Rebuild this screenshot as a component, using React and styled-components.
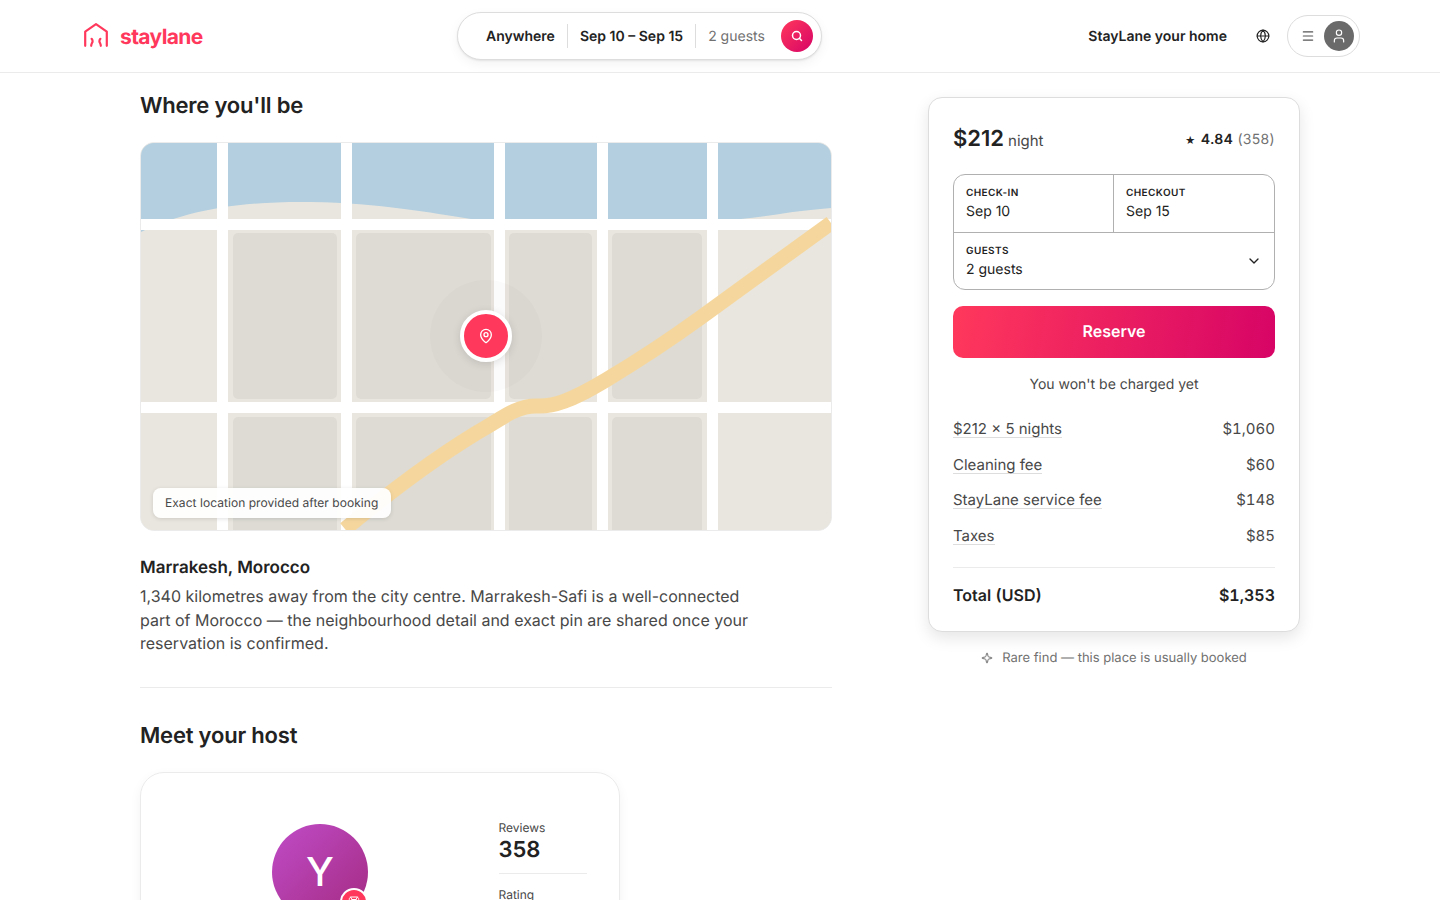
import React from 'react'
import styled, { createGlobalStyle } from 'styled-components'
import { Search, Globe, Menu, User, MapPin, ChevronDown, Sparkle, Medal } from 'lucide-react'

const GlobalStyle = createGlobalStyle`
  * { box-sizing: border-box; }
  html, body { margin: 0; padding: 0; height: 100%; overflow: hidden; }
  body {
    font-family: Inter, "Liberation Sans", sans-serif;
    color: #222;
    background: #fff;
    text-rendering: geometricPrecision;
  }
  #root { height: 100vh; overflow: hidden; }
`

const Header = styled.header`
  height: 73px;
  padding: 0 80px;
  border-bottom: 1px solid #ebebeb;
  display: grid;
  grid-template-columns: 377px auto 1fr;
  align-items: center;
`

const Logo = styled.a`
  display: flex;
  align-items: center;
  gap: 12px;
  padding-left: 4px;
  color: #ff385c;
  font-size: 21px;
  line-height: 26px;
  font-weight: 700;
  letter-spacing: -0.6px;
  svg { margin-bottom: 2px; }
  span { padding-top: 3px; }
`

const SearchPill = styled.div`
  display: flex;
  align-items: center;
  height: 48px;
  padding: 0 8px 0 16px;
  border: 1px solid #dddddd;
  border-radius: 24px;
  background: #fff;
  box-shadow: 0 1px 2px rgba(0, 0, 0, 0.08), 0 4px 12px rgba(0, 0, 0, 0.05);
`

const PillItem = styled.span`
  height: 24px;
  padding: 0 12px;
  font-size: 14px;
  line-height: 26px;
  font-weight: ${({ $muted }) => ($muted ? 400 : 600)};
  color: ${({ $muted }) => ($muted ? '#717171' : '#222')};
  & + & { border-left: 1px solid #dddddd; }
`

const SearchButton = styled.span`
  width: 32px;
  height: 32px;
  margin-left: 4px;
  border-radius: 50%;
  background: linear-gradient(135deg, #ff385c, #d70466);
  color: #fff;
  display: flex;
  align-items: center;
  justify-content: center;
`

const HeaderRight = styled.div`
  display: flex;
  align-items: center;
  justify-content: flex-end;
`

const HostLink = styled.a`
  font-size: 14px;
  font-weight: 600;
  color: #222;
`

const GlobeButton = styled.span`
  display: flex;
  margin: 0 17px 0 29px;
  color: #222;
`

const UserMenu = styled.div`
  display: flex;
  align-items: center;
  gap: 9px;
  height: 42px;
  padding: 0 5px 0 13px;
  border: 1px solid #dddddd;
  border-radius: 21px;
  color: #555;
`

const UserAvatar = styled.span`
  width: 30px;
  height: 30px;
  border-radius: 50%;
  background: #6a6a6a;
  color: #fff;
  display: flex;
  align-items: center;
  justify-content: center;
`

const Page = styled.main`
  width: 1160px;
  margin: 0 auto;
  display: grid;
  grid-template-columns: 692px 372px;
  justify-content: space-between;
  align-items: start;
`

const Left = styled.div`
  padding-top: 18px;
`

const SectionTitle = styled.h2`
  margin: 0 0 21px;
  font-size: 22px;
  line-height: 30px;
  font-weight: 600;
  letter-spacing: -0.2px;
  color: #222;
`

const MapBox = styled.div`
  position: relative;
  height: 389px;
  border: 1px solid #ebebeb;
  border-radius: 14px;
  overflow: hidden;
  background: #e9e6df;
`

const MapArt = styled.svg`
  display: block;
  width: 100%;
  height: 100%;
`

const PinHalo = styled.div`
  position: absolute;
  left: 289px;
  top: 137px;
  width: 112px;
  height: 112px;
  border-radius: 50%;
  background: rgba(140, 100, 100, 0.025);
  display: flex;
  align-items: center;
  justify-content: center;
`

const Pin = styled.div`
  width: 52px;
  height: 52px;
  border-radius: 50%;
  border: 4px solid #fff;
  background: #ff385c;
  color: #fff;
  box-shadow: 0 2px 8px rgba(0, 0, 0, 0.12);
  display: flex;
  align-items: center;
  justify-content: center;
`

const MapNote = styled.div`
  position: absolute;
  left: 12px;
  bottom: 12px;
  padding: 0 13px 0 12px;
  height: 30px;
  line-height: 30px;
  border-radius: 8px;
  background: rgba(255, 255, 255, 0.94);
  box-shadow: 0 1px 4px rgba(0, 0, 0, 0.12);
  font-size: 12px;
  letter-spacing: 0.05px;
  color: #484848;
`

const PlaceName = styled.h3`
  margin: 24px 0 4px;
  font-size: 17px;
  line-height: 26px;
  font-weight: 600;
  color: #222;
`

const PlaceText = styled.p`
  margin: 0;
  max-width: 620px;
  font-size: 16px;
  line-height: 23.5px;
  color: #484848;
`

const Rule = styled.hr`
  margin: 31px 0 33px;
  border: 0;
  border-top: 1px solid #ebebeb;
`

const HostCard = styled.section`
  width: 480px;
  height: 320px;
  border: 1px solid #ebebeb;
  border-radius: 24px;
  box-shadow: 0 4px 12px rgba(0, 0, 0, 0.05);
  display: grid;
  grid-template-columns: 1fr 88.5px;
  padding: 47px 32px 0 0;
`

const HostPhoto = styled.div`
  justify-self: start;
  position: relative;
  margin: 4px 0 0 131px;
  width: 96px;
  height: 96px;
  border-radius: 50%;
  background: linear-gradient(135deg, #c04cc8, #a32a80);
  color: #fff;
  font-size: 40px;
  font-weight: 500;
  display: flex;
  align-items: center;
  justify-content: center;
`

const HostBadge = styled.span`
  position: absolute;
  right: 0;
  bottom: 4px;
  width: 28px;
  height: 28px;
  border-radius: 50%;
  border: 2px solid #fff;
  background: #ff385c;
  color: #fff;
  display: flex;
  align-items: center;
  justify-content: center;
`

const Stat = styled.div`
  padding-bottom: 10px;
  margin-bottom: 13px;
  border-bottom: 1px solid #ebebeb;
`

const StatLabel = styled.div`
  font-size: 12px;
  line-height: 16px;
  color: #484848;
`

const StatValue = styled.div`
  margin-top: 1px;
  font-size: 22px;
  line-height: 26px;
  font-weight: 600;
  color: #222;
`

const Aside = styled.aside`
  padding-top: 24px;
`

const BookingCard = styled.div`
  border: 1px solid #dddddd;
  border-radius: 14px;
  padding: 24px;
  background: #fff;
  box-shadow: 0 6px 16px rgba(0, 0, 0, 0.1);
`

const PriceRow = styled.div`
  display: flex;
  align-items: center;
  justify-content: space-between;
  margin-bottom: 18px;
  height: 34px;
`

const Price = styled.div`
  margin-bottom: 1px;
  font-size: 15px;
  color: #484848;
  strong {
    font-size: 22px;
    font-weight: 600;
    color: #222;
    margin-right: 4px;
  }
`

const RatingBox = styled.div`
  font-size: 14px;
  color: #717171;
  letter-spacing: 0.3px;
  strong { font-weight: 600; color: #222; }
  i { font-style: normal; color: #222; font-size: 10px; margin-right: 5px; }
`

const Fields = styled.div`
  border: 1px solid #b0b0b0;
  border-radius: 12px;
  overflow: hidden;
`

const DateRow = styled.div`
  display: grid;
  grid-template-columns: 159px 1fr;
  border-bottom: 1px solid #b0b0b0;
`

const Field = styled.div`
  height: ${({ $h }) => $h}px;
  padding: 11px 12px 0;
  position: relative;
  border-left: ${({ $divided }) => ($divided ? '1px solid #b0b0b0' : '0')};
`

const FieldLabel = styled.div`
  font-size: 10px;
  line-height: 14px;
  font-weight: 600;
  letter-spacing: 0.4px;
  color: #222;
`

const FieldValue = styled.div`
  font-size: 14px;
  line-height: 22px;
  margin-top: 1px;
  color: #222;
`

const FieldChevron = styled.span`
  position: absolute;
  right: 12px;
  top: 20px;
  display: flex;
  color: #222;
`

const ReserveButton = styled.button`
  display: block;
  width: 100%;
  height: 52px;
  margin-top: 16px;
  padding: 0 0 2px;
  border: 0;
  border-radius: 10px;
  background: linear-gradient(100deg, #ff385c, #d70466);
  color: #fff;
  font: 600 16px Inter, sans-serif;
  text-rendering: geometricPrecision;
`

const NoCharge = styled.p`
  margin: 18px 0 0;
  text-align: center;
  font-size: 14px;
  line-height: 17px;
  color: #484848;
`

const Lines = styled.div`
  margin-top: 25px;
`

const Line = styled.div`
  display: flex;
  justify-content: space-between;
  align-items: flex-start;
  font-size: 15px;
  line-height: 22px;
  color: #484848;
  margin-top: ${({ $gap }) => $gap}px;
  font-variant-numeric: tabular-nums;
`

const LineLabel = styled.span`
  height: 20px;
  border-bottom: 1px solid #dddddd;
  line-height: 21px;
  font-variant-numeric: normal;
`

const Total = styled.div`
  display: flex;
  justify-content: space-between;
  margin-top: 20px;
  padding-top: 15px;
  border-top: 1px solid #ebebeb;
  font-size: 16px;
  line-height: 24px;
  font-weight: 600;
  color: #222;
  font-variant-numeric: tabular-nums;
`

const Rare = styled.div`
  margin-top: 17px;
  display: flex;
  align-items: center;
  justify-content: center;
  gap: 9px;
  font-size: 13px;
  line-height: 18px;
  color: #717171;
`

const LogoMark = () => (
  <svg width="24" height="24" viewBox="0 0 24 24" fill="none" stroke="#ff385c" strokeWidth="2.2" strokeLinecap="round" strokeLinejoin="round">
    <path d="M1.2 22.8V8.6L12 1.2l10.8 7.4v14.2" />
    <path d="M7.2 22.8c0-2.4 1.4-2.9 1.4-4.6 0-1-.5-1.8-1-2.4" />
    <path d="M16.8 22.8c0-2.4-1.4-2.9-1.4-4.6 0-1 .5-1.8 1-2.4" />
  </svg>
)

const blockColumns = [
  { x: 92, w: 104 },
  { x: 215, w: 135 },
  { x: 368, w: 83 },
  { x: 471, w: 90 },
]

const MapDrawing = () => (
  <MapArt viewBox="0 0 690 387" preserveAspectRatio="none">
    <rect width="690" height="387" fill="#e9e6df" />
    <path d="M0 0H690V65C650 68 625 74 600 76H330C290 70 240 60 170 59C90 58 40 70 0 89Z" fill="#b3cfe0" />
    {blockColumns.map(({ x, w }) => (
      <g key={x} fill="#dddbd4">
        <rect x={x} y="90" width={w} height="166" rx="5" />
        <rect x={x} y="274" width={w} height="130" rx="5" />
      </g>
    ))}
    <g fill="#fff">
      <rect x="0" y="76" width="690" height="11" />
      <rect x="0" y="259" width="690" height="11" />
      <rect x="76" y="0" width="11" height="387" />
      <rect x="200" y="0" width="11" height="387" />
      <rect x="353" y="0" width="11" height="387" />
      <rect x="456" y="0" width="11" height="387" />
      <rect x="566" y="0" width="11" height="387" />
    </g>
    <path
      d="M204 386C250 348 300 310 349 282C365 272 378 263 395 263C412 264 430 258 465 237C495 219 530 196 559 175L690 80"
      fill="none"
      stroke="#f5d79e"
      strokeWidth="15"
    />
  </MapArt>
)

export default function App() {
  return (
    <>
      <GlobalStyle />
      <Header>
        <Logo>
          <LogoMark />
          <span>staylane</span>
        </Logo>
        <SearchPill>
          <PillItem>Anywhere</PillItem>
          <PillItem>Sep 10 – Sep 15</PillItem>
          <PillItem $muted>2 guests</PillItem>
          <SearchButton>
            <Search size={12} strokeWidth={3} />
          </SearchButton>
        </SearchPill>
        <HeaderRight>
          <HostLink>StayLane your home</HostLink>
          <GlobeButton>
            <Globe size={14} />
          </GlobeButton>
          <UserMenu>
            <Menu size={14} />
            <UserAvatar>
              <User size={16} strokeWidth={1.75} />
            </UserAvatar>
          </UserMenu>
        </HeaderRight>
      </Header>
      <Page>
        <Left>
          <SectionTitle>Where you'll be</SectionTitle>
          <MapBox>
            <MapDrawing />
            <PinHalo>
              <Pin>
                <MapPin size={16} />
              </Pin>
            </PinHalo>
            <MapNote>Exact location provided after booking</MapNote>
          </MapBox>
          <PlaceName>Marrakesh, Morocco</PlaceName>
          <PlaceText>
            1,340 kilometres away from the city centre. Marrakesh-Safi is a well-connected part of Morocco — the
            neighbourhood detail and exact pin are shared once your reservation is confirmed.
          </PlaceText>
          <Rule />
          <SectionTitle>Meet your host</SectionTitle>
          <HostCard>
            <HostPhoto>
              Y
              <HostBadge>
                <Medal size={12} />
              </HostBadge>
            </HostPhoto>
            <div>
              <Stat>
                <StatLabel>Reviews</StatLabel>
                <StatValue>358</StatValue>
              </Stat>
              <Stat>
                <StatLabel>Rating</StatLabel>
                <StatValue>4.84</StatValue>
              </Stat>
            </div>
          </HostCard>
        </Left>
        <Aside>
          <BookingCard>
            <PriceRow>
              <Price>
                <strong>$212</strong>night
              </Price>
              <RatingBox>
                <i>★</i>
                <strong>4.84</strong> (358)
              </RatingBox>
            </PriceRow>
            <Fields>
              <DateRow>
                <Field $h={57}>
                  <FieldLabel>CHECK-IN</FieldLabel>
                  <FieldValue>Sep 10</FieldValue>
                </Field>
                <Field $h={57} $divided>
                  <FieldLabel>CHECKOUT</FieldLabel>
                  <FieldValue>Sep 15</FieldValue>
                </Field>
              </DateRow>
              <Field $h={56}>
                <FieldLabel>GUESTS</FieldLabel>
                <FieldValue>2 guests</FieldValue>
                <FieldChevron>
                  <ChevronDown size={16} />
                </FieldChevron>
              </Field>
            </Fields>
            <ReserveButton>Reserve</ReserveButton>
            <NoCharge>You won't be charged yet</NoCharge>
            <Lines>
              <Line $gap={0}>
                <LineLabel>$212 × 5 nights</LineLabel>
                <span>$1,060</span>
              </Line>
              <Line $gap={13.6}>
                <LineLabel>Cleaning fee</LineLabel>
                <span>$60</span>
              </Line>
              <Line $gap={13.6}>
                <LineLabel>StayLane service fee</LineLabel>
                <span>$148</span>
              </Line>
              <Line $gap={13.6}>
                <LineLabel>Taxes</LineLabel>
                <span>$85</span>
              </Line>
            </Lines>
            <Total>
              <span>Total (USD)</span>
              <span>$1,353</span>
            </Total>
          </BookingCard>
          <Rare>
            <Sparkle size={12} />
            Rare find — this place is usually booked
          </Rare>
        </Aside>
      </Page>
    </>
  )
}
